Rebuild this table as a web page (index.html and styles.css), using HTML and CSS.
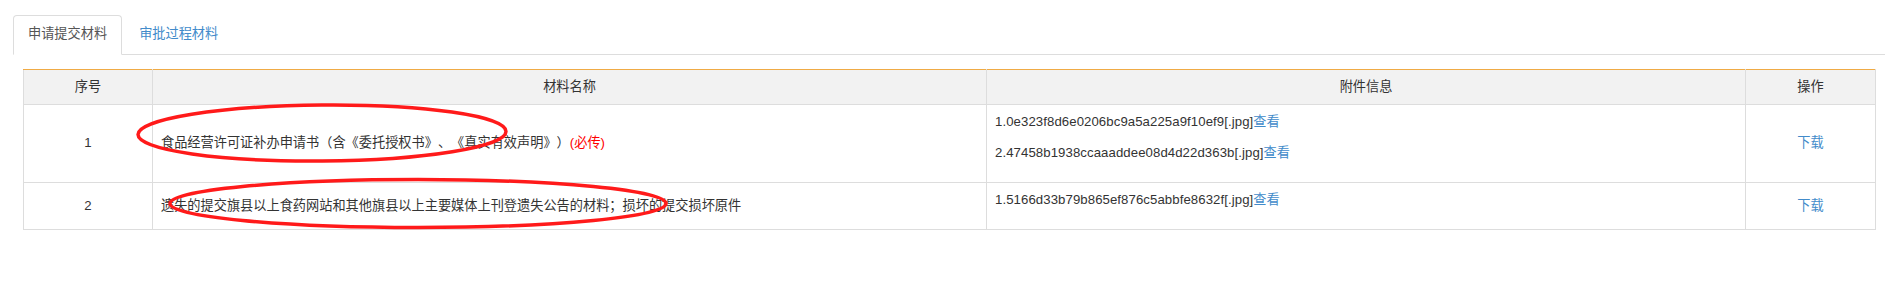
FILE: index.html
```html
<!DOCTYPE html>
<html lang="zh-CN">
<head>
<meta charset="utf-8">
<title>材料</title>
<link rel="stylesheet" href="styles.css">
</head>
<body>
<div class="page">
  <ul class="tabs">
    <li class="tab active">申请提交材料</li>
    <li class="tab">审批过程材料</li>
  </ul>
  <div class="tab-content">
    <table class="materials">
      <colgroup>
        <col class="c-no">
        <col class="c-name">
        <col class="c-file">
        <col class="c-op">
      </colgroup>
      <thead>
        <tr><th>序号</th><th>材料名称</th><th>附件信息</th><th>操作</th></tr>
      </thead>
      <tbody>
        <tr>
          <td class="center">1</td>
          <td>食品经营许可证补办申请书（含《委托授权书》、《真实有效声明》）<span class="required">(必传)</span></td>
          <td class="files">
            <p>1.0e323f8d6e0206bc9a5a225a9f10ef9[.jpg]<a class="link">查看</a></p>
            <p>2.47458b1938ccaaaddee08d4d22d363b[.jpg]<a class="link">查看</a></p>
          </td>
          <td class="center"><a class="link">下载</a></td>
        </tr>
        <tr>
          <td class="center">2</td>
          <td>遗失的提交旗县以上食药网站和其他旗县以上主要媒体上刊登遗失公告的材料；损坏的提交损坏原件</td>
          <td class="files">
            <p>1.5166d33b79b865ef876c5abbfe8632f[.jpg]<a class="link">查看</a></p>
          </td>
          <td class="center"><a class="link">下载</a></td>
        </tr>
      </tbody>
    </table>
  </div>
  <svg class="annotations" width="1898" height="294" viewBox="0 0 1898 294">
    <ellipse cx="322" cy="133" rx="184" ry="28" transform="rotate(-0.5 322 133)"></ellipse>
    <ellipse cx="418" cy="203.5" rx="248" ry="24"></ellipse>
  </svg>
</div>
</body>
</html>
```

FILE: styles.css
```css
html, body {
  margin: 0;
  padding: 0;
  background: #fff;
}

body {
  font-family: "Liberation Sans", "Noto Sans CJK SC", sans-serif;
  font-size: 13.2px;
  color: #333;
  text-spacing-trim: space-all;
}

.page {
  position: relative;
  padding: 15px 13px 0;
  height: 279px;
}

.tabs {
  display: flex;
  list-style: none;
  margin: 0;
  padding: 0;
  border-bottom: 1px solid #ddd;
}

.tab {
  margin-right: 2px;
  margin-bottom: -1px;
  padding: 8px 14px 10px;
  line-height: 20px;
  border: 1px solid transparent;
  border-radius: 4px 4px 0 0;
  color: #428bca;
}

.tab.active {
  color: #555;
  background: #fff;
  border-color: #ddd;
  border-bottom-color: #fff;
}

.tab-content {
  padding: 14px 9px 0 10px;
}

.materials {
  width: 100%;
  border-collapse: collapse;
  table-layout: fixed;
}

.c-no { width: 129px; }
.c-name { width: 834px; }
.c-file { width: 759px; }

.materials th,
.materials td {
  border: 1px solid #ddd;
  line-height: 20px;
  vertical-align: middle;
}

.materials th {
  background: #f2f2f2;
  border-top: 1px solid #f0ab45;
  font-weight: normal;
  padding: 7px 8px;
  text-align: center;
}

.materials td {
  padding: 7px 8px 8px;
  text-align: left;
}

.materials td.center {
  text-align: center;
}

.files p {
  margin: 0 0 11px;
  line-height: 20px;
  letter-spacing: 0.08px;
}

.link {
  color: #428bca;
  text-decoration: none;
}

.required {
  color: #f00;
}

.annotations {
  position: absolute;
  top: 0;
  left: 0;
  pointer-events: none;
}

.annotations ellipse {
  fill: none;
  stroke: #ff1a1a;
  stroke-width: 3.5;
}
```
